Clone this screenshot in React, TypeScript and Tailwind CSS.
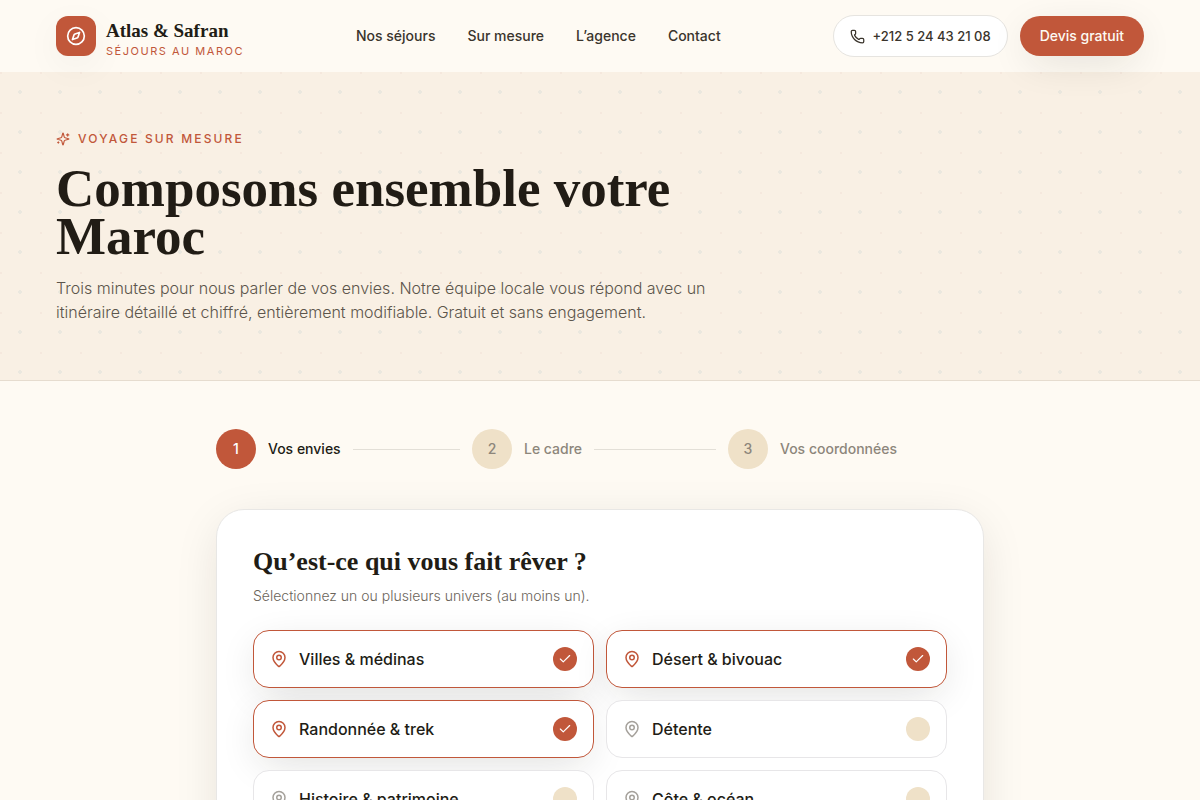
import { useState } from "react";
import { Check, Compass, MapPin, Phone } from "lucide-react";
import clsx from "clsx";

const navLinks = ["Nos séjours", "Sur mesure", "L’agence", "Contact"];
const steps = ["Vos envies", "Le cadre", "Vos coordonnées"];
const themes = [
  "Villes & médinas",
  "Désert & bivouac",
  "Randonnée & trek",
  "Détente",
  "Histoire & patrimoine",
  "Côte & océan",
];

function SparklesIcon() {
  return (
    <svg
      viewBox="0 0 24 24"
      className="size-3.5 shrink-0"
      fill="none"
      stroke="currentColor"
      strokeWidth="2"
      strokeLinecap="round"
      strokeLinejoin="round"
      aria-hidden="true"
    >
      <path d="M9.937 15.5A2 2 0 0 0 8.5 14.063l-6.135-1.582a.5.5 0 0 1 0-.962L8.5 9.936A2 2 0 0 0 9.937 8.5l1.582-6.135a.5.5 0 0 1 .963 0L14.063 8.5A2 2 0 0 0 15.5 9.937l6.135 1.581a.5.5 0 0 1 0 .964L15.5 14.063a2 2 0 0 0-1.437 1.437l-1.582 6.135a.5.5 0 0 1-.963 0z" />
      <path d="M20 3v4" />
      <path d="M22 5h-4" />
      <path d="M4 17v2" />
      <path d="M5 18H3" />
    </svg>
  );
}

function Header() {
  return (
    <header className="relative z-10">
      <div className="mx-auto flex h-18 max-w-[1200px] items-center justify-between px-14">
        <a href="#accueil" className="flex items-center gap-2.5">
          <span className="grid size-10 place-items-center rounded-xl bg-[#c1573a] text-white shadow-[0_10px_40px_-8px_rgba(33,28,21,0.12)]">
            <Compass size={20} />
          </span>
          <span className="flex flex-col pt-1.5">
            <span className="font-['Liberation_Serif',serif] text-[19px] leading-6 font-bold">Atlas &amp; Safran</span>
            <span className="text-[11px] leading-4 tracking-[0.14em] text-[#c1573a] uppercase">Séjours au Maroc</span>
          </span>
        </a>
        <nav className="flex gap-8 text-sm font-medium text-[#3a342c]" aria-label="Navigation principale">
          {navLinks.map((label) => (
            <a key={label} href="#">
              {label}
            </a>
          ))}
        </nav>
        <div className="flex items-center gap-3 text-sm">
          <a
            href="tel:+212524432108"
            className="flex h-[42px] items-center gap-2 rounded-full border border-[#e6e4e0] bg-white px-4 text-[13px] font-medium text-[#3a342c]"
          >
            <Phone size={15} />
            +212 5 24 43 21 08
          </a>
          <a
            href="#devis"
            className="flex h-10 items-center rounded-full bg-[#c1573a] px-5 font-medium text-[#fdfaf3] shadow-[0_10px_40px_-8px_rgba(33,28,21,0.16)]"
          >
            Devis gratuit
          </a>
        </div>
      </div>
    </header>
  );
}

function Hero() {
  return (
    <section className="border-b border-[#e6dccf] bg-[#f9f0e4] bg-[radial-gradient(circle_at_20px_20px,#ebe8df_2px,transparent_2px),radial-gradient(circle_at_1px_1px,#f5e8dd_1px,transparent_1px)] bg-size-[40px_40px]">
      <div className="mx-auto max-w-[1200px] px-14 py-14">
        <p className="flex items-center gap-2 text-xs leading-[22px] font-medium tracking-[0.18em] text-[#c1573a] uppercase">
          <SparklesIcon />
          Voyage sur mesure
        </p>
        <h1 className="mt-3.5 max-w-2xl font-['Liberation_Serif',serif] text-[53px] leading-12 font-bold">
          Composons ensemble votre Maroc
        </h1>
        <p className="mt-4 max-w-2xl text-base leading-6 font-light text-[#5c554b]">
          Trois minutes pour nous parler de vos envies. Notre équipe locale vous répond avec un itinéraire détaillé et
          chiffré, entièrement modifiable. Gratuit et sans engagement.
        </p>
      </div>
    </section>
  );
}

function Stepper() {
  return (
    <ol className="grid grid-cols-3 text-sm font-medium">
      {steps.map((label, index) => (
        <li
          key={label}
          className={clsx("flex items-center gap-3 pr-3", index === 0 ? "text-[#211c15]" : "text-[#8d867b]")}
          aria-current={index === 0 ? "step" : undefined}
        >
          <span
            className={clsx(
              "grid size-10 shrink-0 place-items-center rounded-full",
              index === 0 ? "bg-[#c1573a] text-white" : "bg-[#efe1c8]",
            )}
          >
            {index + 1}
          </span>
          <span className="whitespace-nowrap">{label}</span>
          {index < steps.length - 1 && <span className="h-px grow bg-[#e3dfd7]" />}
        </li>
      ))}
    </ol>
  );
}

function ThemeOption({ label, checked, onToggle }: { label: string; checked: boolean; onToggle: () => void }) {
  return (
    <label
      className={clsx(
        "flex h-[58px] cursor-pointer items-center gap-[11px] rounded-2xl border bg-white px-4",
        checked ? "border-[#c1573a] shadow-[0_10px_40px_-8px_rgba(33,28,21,0.16)]" : "border-[#e7e6e8]",
      )}
    >
      <MapPin size={18} className={clsx("shrink-0", checked ? "text-[#c1573a]" : "text-[#a5a19b]")} />
      <span className="grow text-base font-medium">{label}</span>
      <span className="grid size-6 shrink-0 place-items-center text-white">
        <input
          type="checkbox"
          checked={checked}
          onChange={onToggle}
          className="col-start-1 row-start-1 size-6 appearance-none rounded-full bg-[#efe1c8] checked:bg-[#c1573a]"
        />
        {checked && <Check size={14} className="pointer-events-none col-start-1 row-start-1" />}
      </span>
    </label>
  );
}

export default function App() {
  const [selected, setSelected] = useState<string[]>(themes.slice(0, 3));

  const toggle = (theme: string) =>
    setSelected((current) =>
      current.includes(theme) ? current.filter((item) => item !== theme) : [...current, theme],
    );

  return (
    <div className="min-h-screen bg-[#fefaf3] font-['Inter',sans-serif] text-[#211c15]">
      <Header />
      <Hero />
      <main className="mx-auto max-w-3xl py-12">
        <Stepper />
        <form className="mt-10 rounded-[28px] border border-[#e8e7e5] bg-white p-9 shadow-[0_10px_50px_-10px_rgba(33,28,21,0.15)]">
          <h2 className="font-['Liberation_Serif',serif] text-[26px] leading-8 font-bold">
            Qu’est-ce qui vous fait rêver ?
          </h2>
          <p className="mt-2 text-sm leading-5 font-light text-[#6b645a]">
            Sélectionnez un ou plusieurs univers (au moins un).
          </p>
          <div className="mt-6 grid grid-cols-2 gap-3">
            {themes.map((theme) => (
              <ThemeOption
                key={theme}
                label={theme}
                checked={selected.includes(theme)}
                onToggle={() => toggle(theme)}
              />
            ))}
          </div>
        </form>
      </main>
    </div>
  );
}
